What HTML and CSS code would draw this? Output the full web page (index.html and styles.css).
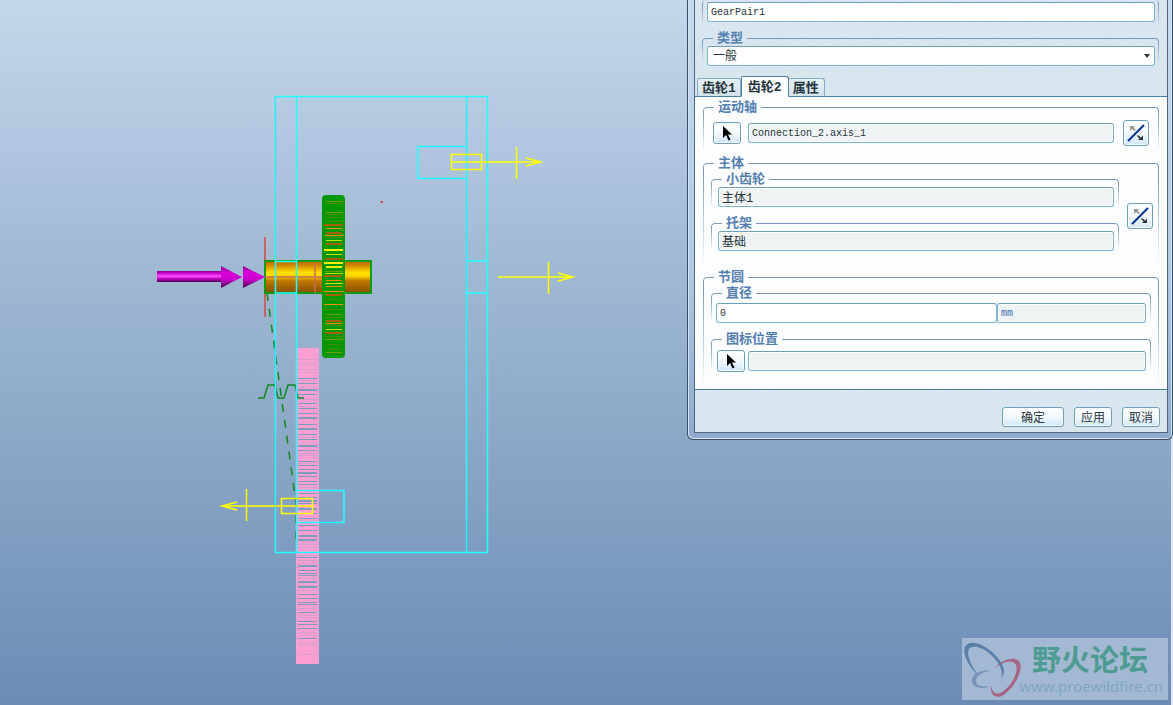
FILE: index.html
```html
<!DOCTYPE html>
<html lang="zh-CN">
<head>
<meta charset="utf-8">
<title>GearPair1</title>
<link rel="stylesheet" href="styles.css">
</head>
<body>
<main class="stage">
  <svg class="model" width="680" height="705" viewBox="0 0 680 705" role="img" aria-label="齿轮副">
    <defs>
      <linearGradient id="shaft" x2="0" y2="1">
        <stop offset="0" stop-color="#b86800"/><stop offset=".12" stop-color="#cf8200"/><stop offset=".36" stop-color="#ffe000"/><stop offset=".46" stop-color="#ffd800"/><stop offset=".62" stop-color="#c07900"/><stop offset="1" stop-color="#855000"/>
      </linearGradient>
      <linearGradient id="rod" x2="0" y2="1">
        <stop offset="0" stop-color="#870087"/><stop offset=".2" stop-color="#d000d0"/><stop offset=".48" stop-color="#fa50fa"/><stop offset=".7" stop-color="#c000c0"/><stop offset="1" stop-color="#4c004c"/>
      </linearGradient>
      <linearGradient id="cone" x2="0" y2="1">
        <stop offset="0" stop-color="#8a008a"/><stop offset=".3" stop-color="#d800d8"/><stop offset=".6" stop-color="#ce00ce"/><stop offset="1" stop-color="#480048"/>
      </linearGradient>
    </defs>

    <path d="M265 237v80" stroke="#c86464" stroke-width="2"/>
    <path d="M267 293L296 503V545" stroke="#0a8c1e" stroke-width="1.5" fill="none" stroke-dasharray="8 8"/>

    <path d="M296 350q0-2 2-2h19q2 0 2 2v314h-23z" fill="#fca0d4"/>
    <path stroke="#7d9dbd" d="M298 378.5h19M298 383.5h19M298 394.5h19M298 403.5h19M298 408.5h19M298 413.5h19M298 424.5h19M298 434.5h19M298 439.5h19M298 450.5h19M298 461.5h19M298 465.5h19M298 469.5h19M298 476.5h19M298 481.5h19M298 484.5h19M298 490.5h19M298 493.5h19M298 497.5h19M298 503.5h19M298 513.5h19M298 518.5h19M298 525.5h19M298 530.5h19M298 557.5h19M298 570.5h19M298 573.5h19M298 575.5h19M298 594.5h19M298 598.5h19M298 602.5h19M298 604.5h19M298 612.5h19M298 621.5h19M298 624.5h19M298 628.5h19M298 638.5h19"/>
    <path stroke="#7d9dbd" stroke-width="2" d="M298 390h19M298 418h19M298 429h19M298 446h19M298 473h19M298 501h19M298 509h19M298 536h19M298 540h19M298 566h19M298 582h19M298 587h19"/>
    <path stroke="#d6a0ca" d="M298 359.5h19M298 363.5h19M298 365.5h19M298 369.5h19M298 372.5h19M298 380.5h19M298 387.5h19M298 399.5h19M298 406.5h19M298 437.5h19M298 443.5h19M298 453.5h19M298 455.5h19M298 463.5h19M298 487.5h19M298 520.5h19M298 522.5h19M298 544.5h19M298 547.5h19M298 555.5h19M298 560.5h19M298 563.5h19M298 578.5h19M298 585.5h19M298 590.5h19M298 608.5h19M298 615.5h19M298 617.5h19M298 632.5h19M298 643.5h19M298 645.5h19M298 654.5h19"/>

    <rect x="265" y="261" width="106" height="32" fill="url(#shaft)" stroke="#139b13" stroke-width="2"/>
    <path d="M265 277h60M315 265v28" stroke="#cd6a50" stroke-width="2" opacity=".75"/>

    <rect x="322" y="195" width="23" height="163" rx="4" fill="#079807"/>
    <path stroke="#448c00" d="M326 203.5h16M325 214.5h18M326 217.5h16M325 221.5h18M325 237.5h18M325 299.5h18M324 309.5h18M324 317.5h19M324 325.5h19M325 336.5h18M326 344.5h16M326 349.5h16"/>
    <path stroke="#6d9d00" d="M326 201.5h16M326 212.5h16M325 271.5h18M326 314.5h16M325 339.5h18M326 352.5h16"/>
    <path stroke="#a76000" stroke-width="2" d="M324 225h19M326 233h16M326 244h16M325 259h18M324 276h18M326 295h16M326 321h16M325 333h18"/>
    <path stroke="#f58b00" d="M326 228.5h16M325 235.5h18M326 280.5h16M326 286.5h16M324 291.5h19M324 304.5h19M326 323.5h16"/>
    <path stroke="#f8f000" stroke-width="2" d="M324 250h19M324 263h19M326 267h16"/>
    <path stroke="#c8e000" d="M326 240.5h16M326 254.5h16M325 273.5h18M326 329.5h16M325 283.5h18"/>

    <rect x="157" y="271" width="65" height="11" fill="url(#rod)"/>
    <path d="M221 266l21 11-21 11zM243 266l22 11-22 11z" fill="url(#cone)"/>

    <path d="M258 398h6l4-13h7l3 13h6l4-13h7l3 13h6" fill="none" stroke="#0a8c1e" stroke-width="1.5"/>
    <path d="M275.5 96.500h212v456h-212zM296.500 96.500v456M466.500 96.500v456M466 146.500h-48v32h48M466 261h22M466 293h22M275 261.500h22M275 293h22M296 490.500h48v32h-48" fill="none" stroke="#20ffff" stroke-width="1.500"/>
    <path d="M451.500 154.500h30v15h-30zM451 162h90M526 158l15 4-15 4M516.500 147v32M498 277h75M558 273l15 4-15 4M548.500 262v32M281.500 498.500h31v15h-31zM313 506h-91M237 502l-15 4 15 4M246.500 489v32" fill="none" stroke="#ff0" stroke-width="1.500"/>
    <path d="M380 201h3v2h-2z" fill="#d05050"/>
  </svg>

  <form class="dialog">
    <div class="dialog-body">
      <fieldset class="group top-group name-group">
        <input class="field latin" type="text" value="GearPair1" aria-label="名称">
      </fieldset>
      <fieldset class="group top-group">
        <legend>类型</legend>
        <div class="select-wrap">
          <select class="field" aria-label="类型"><option>一般</option></select>
        </div>
      </fieldset>

      <div class="tabs" role="tablist">
        <button type="button" class="tab" role="tab">齿轮1</button>
        <button type="button" class="tab active" role="tab" aria-selected="true">齿轮2</button>
        <button type="button" class="tab" role="tab">属性</button>
      </div>

      <section class="panel" role="tabpanel">
        <fieldset class="group axis-group">
          <legend>运动轴</legend>
          <div class="axis-row">
            <button type="button" class="btn pick" aria-label="选择运动轴"><svg width="12" height="17" viewBox="0 0 12 17"><path d="M2 1v12l3-3 2.500 5.500 2-1L7 9.500h4z" fill="#000"/></svg></button>
            <input class="field latin" type="text" readonly value="Connection_2.axis_1" aria-label="运动轴">
            <button type="button" class="btn flip" aria-label="反向"><svg width="18" height="18" viewBox="0 0 18 18"><path d="M1 17L17 1" stroke="#00309c" stroke-width="2"/><path d="M3 2h5L6.500 3.500 9 6 7.500 7 5 5 3 7z" fill="#9a998c"/><path d="M16 16h-5l1.500-1.500L10 12l1-1 3 2.500 2-2z" fill="#2f363b"/></svg></button>
          </div>
        </fieldset>

        <fieldset class="group body-group">
          <legend>主体</legend>
          <div class="body-grid">
            <div class="stack">
              <fieldset class="group inner">
                <legend>小齿轮</legend>
                <div class="row"><input class="field" type="text" readonly value="主体1" aria-label="小齿轮"></div>
              </fieldset>
              <fieldset class="group inner">
                <legend>托架</legend>
                <div class="row"><input class="field" type="text" readonly value="基础" aria-label="托架"></div>
              </fieldset>
            </div>
            <button type="button" class="btn flip" aria-label="交换主体"><svg width="18" height="18" viewBox="0 0 18 18"><path d="M1 17L17 1" stroke="#00309c" stroke-width="2"/><path d="M3 2h5L6.500 3.500 9 6 7.500 7 5 5 3 7z" fill="#9a998c"/><path d="M16 16h-5l1.500-1.500L10 12l1-1 3 2.500 2-2z" fill="#2f363b"/></svg></button>
          </div>
        </fieldset>

        <fieldset class="group pitch-group">
          <legend>节圆</legend>
          <div class="stack">
            <fieldset class="group inner">
              <legend>直径</legend>
              <div class="size-row">
                <input class="field latin" type="text" value="0" aria-label="直径">
                <input class="field latin unit" type="text" readonly value="mm" aria-label="单位">
              </div>
            </fieldset>
            <fieldset class="group inner">
              <legend>图标位置</legend>
              <div class="icon-row">
                <button type="button" class="btn pick" aria-label="选择图标位置"><svg width="12" height="17" viewBox="0 0 12 17"><path d="M2 1v12l3-3 2.500 5.500 2-1L7 9.500h4z" fill="#000"/></svg></button>
                <input class="field" type="text" readonly aria-label="图标位置">
              </div>
            </fieldset>
          </div>
        </fieldset>
      </section>

      <footer class="actions">
        <button type="button" class="btn ok">确定</button>
        <button type="button" class="btn">应用</button>
        <button type="button" class="btn">取消</button>
      </footer>
    </div>
  </form>

  <aside class="watermark">
    <svg width="58" height="58" viewBox="0 0 58 58" aria-hidden="true">
      <path fill="#5880a8" d="M16 37C5 28-2 14 1 7 5-1 18 3 28 12 38 21 44 31 37 38 40 31 35 22 26 14 17 6 8 5 5 9 2 14 7 27 16 37z"/>
      <path fill="#a66583" d="M30 29C38 19 52 15 56 23 59 31 50 49 38 56 30 59 26 54 27 45 28 52 32 56 38 52 47 47 55 32 52 25 49 19 39 21 30 29z"/>
      <path fill="#7894ba" d="M26 31C17 29 6 35 8 42 10 49 20 49 26 46 19 47 12 46 12 41 12 36 18 32 26 31z"/>
    </svg>
    <div class="watermark-text">
      <strong>野火论坛</strong>
      <span>www.proewildfire.cn</span>
    </div>
  </aside>
</main>
</body>
</html>
```
FILE: styles.css
```css
* {
  box-sizing: border-box;
}

body {
  margin: 0;
  font: 12px/16px "Liberation Mono", "Noto Sans CJK SC", monospace;
  color: #26343c;
}

.stage {
  position: relative;
  min-height: 100vh;
  overflow: hidden;
  background:
    linear-gradient(#dfe8f3, #dfe8f3) right / 2px 100% no-repeat,
    linear-gradient(#c3d8e9, #b0c5de 22%, #a4bdd5 33%, #6c8cb5);
}

.model {
  display: block;
}

.dialog {
  position: absolute;
  top: 0;
  left: 687px;
  right: 0;
  padding: 0 4px 6px 6px;
  border: 1px solid #3a4e66;
  border-top: 0;
  border-radius: 0 0 6px 6px;
  background: linear-gradient(#c6daee, #b0cbe4 60%, #8eaace);
  box-shadow: inset 1px -1px 0 #d5e3f2, inset -1px 0 0 #d5e3f2;
}

.dialog-body {
  border: 1px solid #51657e;
  border-top: 0;
  background: repeating-linear-gradient(135deg, #d8e5ee 0 3px, #dde9f1 3px 4px);
}

.group {
  position: relative;
  min-width: 0;
  margin: 0;
  padding: 0;
  border: 0;
}

.group::before {
  content: "";
  position: absolute;
  top: -8px;
  left: 0;
  right: 0;
  bottom: 4px;
  border: 1px solid #7799bd;
  border-bottom: 0;
  border-radius: 4px 4px 0 0;
  -webkit-mask-image: linear-gradient(#000 10%, transparent);
  mask-image: linear-gradient(#000 10%, transparent);
  pointer-events: none;
}

.group > * {
  position: relative;
  z-index: 1;
}

legend {
  margin-left: 11px;
  padding: 2px 4px 0;
  background: #fcfdff;
  color: #5480b0;
  font-size: 13px;
  font-weight: bold;
  line-height: 14px;
}

.top-group {
  margin: 0 8px 0 7px;
  padding: 0 4px 0 5px;
}

.top-group legend {
  margin-left: 6px;
  background: #dae6ef;
}

.name-group {
  height: 30px;
  padding-top: 2px;
}

.name-group::before {
  top: 0;
  border-top: 0;
}

.field {
  display: block;
  flex: 1;
  width: 100%;
  min-width: 0;
  height: 20px;
  margin: 0;
  padding: 0 3px;
  border: 1px solid #79b4d4;
  border-top-color: #6f9db5;
  border-radius: 3px;
  background: #fff;
  color: #26343c;
  font: 12px/16px "Liberation Mono", "Noto Sans CJK SC", monospace;
}

.field.latin {
  font: 10px/18px "Liberation Mono", monospace;
}

.field[readonly] {
  background: #f0f3f4;
  box-shadow: inset 0 0 0 1px #fff;
}

select.field {
  padding: 2px 20px 0 5px;
  appearance: none;
}

.select-wrap::after {
  content: "";
  position: absolute;
  top: 8px;
  right: 5px;
  border: 3px solid transparent;
  border-top: 4px solid #26343c;
  border-bottom: 0;
}

.tabs {
  display: flex;
  align-items: flex-end;
  height: 21px;
  margin: 10px 0 -1px 2px;
}

.tab {
  position: relative;
  height: 19px;
  padding: 1px 5px 0 4px;
  border: 1px solid #86abc4;
  border-bottom-color: #4d819f;
  border-left-width: 0;
  border-radius: 2px 3px 0 0;
  background: linear-gradient(#e6eff6, #d3e2ed);
  color: #26343c;
  font: bold 13px/17px "Liberation Mono", "Noto Sans CJK SC", monospace;
}

.tab:first-child {
  padding-right: 4px;
  border-left-width: 1px;
}

.tab.active {
  height: 21px;
  padding: 1px 6px 0;
  border-color: #4d819f;
  border-left-width: 1px;
  border-bottom-color: #fcfdff;
  background: #fcfdff;
}

.panel {
  padding: 2px 8px 0;
  border-top: 1px solid #4680a5;
  border-bottom: 1px solid #4b7f96;
  background: #fcfdff;
}

.axis-group {
  height: 56px;
}

.axis-row {
  display: flex;
  align-items: center;
  padding: 5px 10px 0;
}

.axis-row .field {
  margin: 0 9px 0 7px;
}

.body-group {
  height: 114px;
}

.body-grid {
  display: grid;
  grid-template-columns: 1fr 26px;
  gap: 8px;
  align-items: center;
  padding: 0 6px 0 8px;
}

.body-grid .flip {
  margin-top: 10px;
}

.stack {
  display: grid;
  gap: 8px;
}

.inner::before {
  bottom: 0;
}

.row {
  padding: 0 5px 0 7px;
}

.pitch-group {
  height: 120px;
}

.pitch-group > .stack {
  padding: 0 8px;
}

.size-row {
  display: flex;
  padding: 2px 5px 0;
}

.size-row .field {
  flex: 273;
}

.size-row .unit {
  flex: 141;
  color: #3d6cae;
}

.icon-row {
  display: flex;
  align-items: center;
  gap: 3px;
  padding: 3px 5px 0 6px;
}

.btn {
  display: flex;
  flex: none;
  align-items: center;
  justify-content: center;
  width: 38px;
  height: 20px;
  padding: 0;
  border: 1px solid #6e9fb9;
  border-radius: 3px;
  background: linear-gradient(#fff, #f5faff 45%, #cfe6f7);
  box-shadow: inset 0 0 0 1px #f8fcff;
  color: #26343c;
  font: 12px/16px "Noto Sans CJK SC", sans-serif;
}

.pick {
  width: 28px;
  height: 22px;
}

.flip {
  width: 26px;
  height: 26px;
}

.actions {
  display: flex;
  justify-content: flex-end;
  gap: 10px;
  padding: 17px 7px 5px;
}

.ok {
  width: 62px;
}

.watermark {
  position: absolute;
  right: 5px;
  bottom: 5px;
  display: flex;
  gap: 10px;
  padding: 2px 5px 2px 2px;
  background: #a3b8d3;
}

.watermark svg {
  flex: none;
}

.watermark-text {
  display: flex;
  flex-direction: column;
  align-items: flex-end;
  width: 131px;
}

.watermark strong {
  align-self: flex-start;
  color: #4e9c91;
  font: bold 29px/36px "Noto Sans CJK SC", sans-serif;
}

.watermark span {
  color: #7ea7be;
  font: 15px/20px "Noto Sans", sans-serif;
}
```
